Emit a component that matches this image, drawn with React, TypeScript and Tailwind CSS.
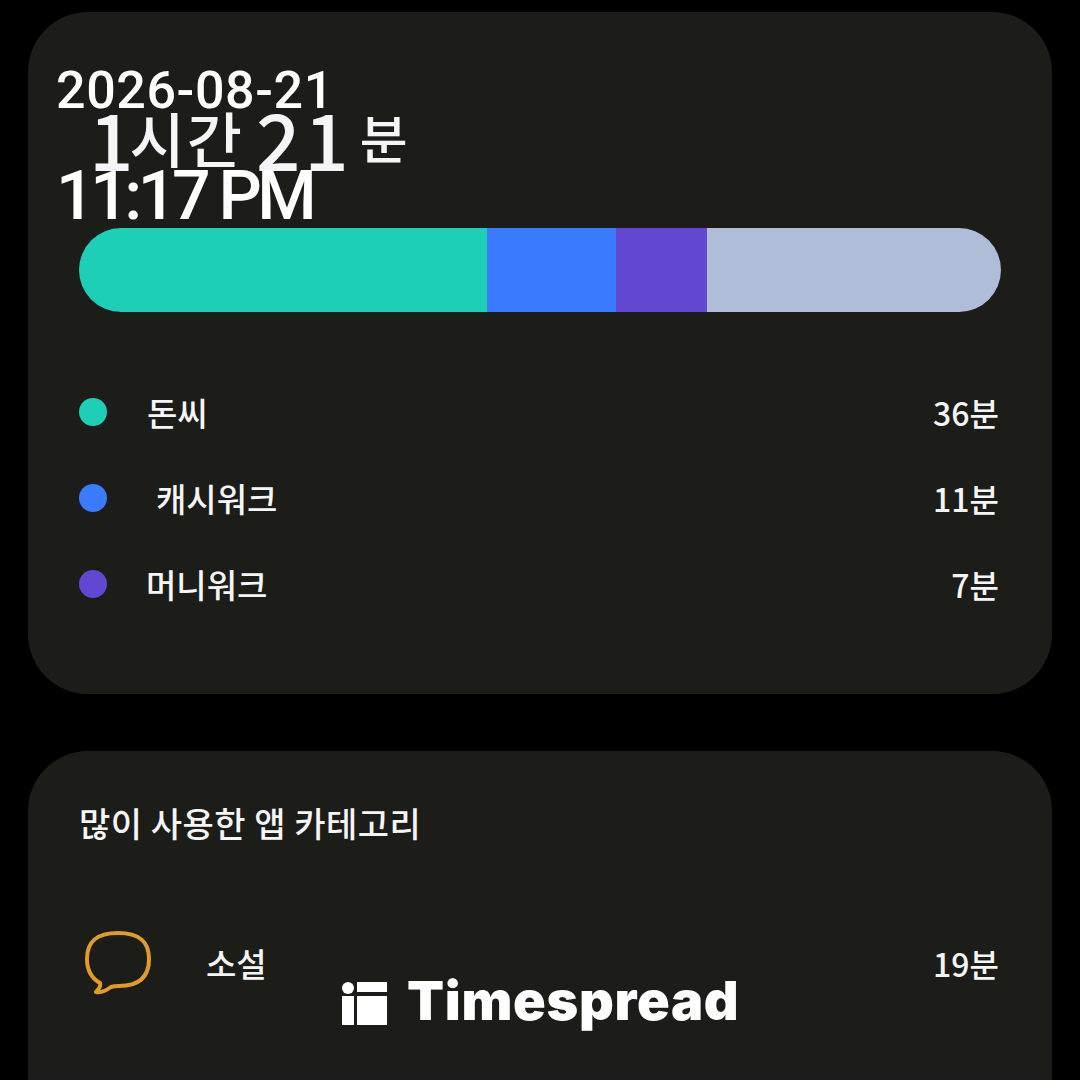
const hangul = { fontFamily: '"Noto Sans CJK KR", sans-serif' };

const usage = [
  { name: '돈씨', time: '36분', dot: 'bg-[#1dcfb6]', indent: 'ml-[40px]' },
  { name: '캐시워크', time: '11분', dot: 'bg-[#3a7bff]', indent: 'ml-[49px]' },
  { name: '머니워크', time: '7분', dot: 'bg-[#6247d0]', indent: 'ml-[39px]' },
];

export default function App() {
  return (
    <div className="relative h-[1080px] w-[1080px] overflow-hidden bg-black text-[#f5f5f7]" style={hangul}>
      <div className="px-[28px] pt-[12px]">
        {/* Usage summary */}
        <section className="h-[682px] rounded-[60px] bg-[#1c1c18] pl-[51px] pr-[53px] pt-[80px]">
          <div className="ml-[10px] flex h-[90px] items-center font-medium leading-none">
            <span className="text-[78px]">1</span>
            <span className="ml-[-4px] text-[60px] tracking-[2px]">시간</span>
            <span className="ml-[12px] text-[78px] tracking-[4px]">21</span>
            <span className="ml-[7px] text-[52px]">분</span>
          </div>

          <div className="mr-[-2px] mt-[46px] flex h-[84px] overflow-hidden rounded-full">
            <div className="w-[408px] bg-[#1dcfb6]" />
            <div className="w-[129px] bg-[#3a7bff]" />
            <div className="w-[91px] bg-[#6247d0]" />
            <div className="flex-1 bg-[#b0bdd8]" />
          </div>

          <ul className="mt-[78px] flex flex-col gap-[42px]">
            {usage.map((item) => (
              <li key={item.name} className="flex h-[44px] items-center justify-between">
                <div className="flex items-center">
                  <span className={`h-[28px] w-[28px] rounded-full ${item.dot}`} />
                  <span className={`${item.indent} text-[33px] font-medium leading-none`}>{item.name}</span>
                </div>
                <span className="text-[32px] font-medium leading-none">{item.time}</span>
              </li>
            ))}
          </ul>
        </section>

        {/* Top category */}
        <section className="mt-[57px] h-[400px] rounded-[60px] bg-[#1c1c18] pl-[51px] pr-[53px] pt-[52px]">
          <h2 className="text-[34px] font-medium leading-[40px] tracking-[0.5px]">많이 사용한 앱 카테고리</h2>
          <div className="mt-[88px] flex items-center justify-between">
            <div className="flex items-center">
              <svg viewBox="0 0 66 64" className="ml-[6px] h-[64px] w-[66px]" fill="none">
                <path
                  d="M33 2C12 2 2 10 2 28c0 10 4 19 13 24 1 3-1 6-4 9 5 1 11-2 15-5 3-1 5-1 8-1 20 0 30-9 30-27C64 10 54 2 33 2Z"
                  stroke="#e09c26"
                  strokeWidth="4"
                  strokeLinejoin="round"
                />
              </svg>
              <span className="ml-[55px] text-[33px] font-medium leading-none">소설</span>
            </div>
            <span className="text-[32px] font-medium leading-none">19분</span>
          </div>
        </section>
      </div>

      {/* Watermark overlay */}
      <div className="absolute left-[56px] top-[61px] text-white" style={{ fontFamily: 'Roboto, sans-serif' }}>
        <div className="text-[52px] font-medium leading-[60px] tracking-[0.6px]">2026-08-21</div>
        <div className="mt-[35px] text-[68px] font-medium leading-[80px] tracking-[-4.5px]">11:17 PM</div>
      </div>

      <div className="absolute left-[342px] top-[971px] flex items-center text-white">
        <svg viewBox="0 0 45 43" className="h-[43px] w-[45px]" fill="white">
          <circle cx="6" cy="6" r="6" />
          <rect x="0" y="14" width="12" height="29" />
          <rect x="15" y="0" width="30" height="10" />
          <rect x="15" y="14" width="30" height="29" />
        </svg>
        <span
          className="mb-[4px] ml-[20px] text-[54px] font-black leading-[60px] tracking-[0.7px]"
          style={{ fontFamily: 'Inter, sans-serif' }}
        >
          Timespread
        </span>
      </div>
    </div>
  );
}
